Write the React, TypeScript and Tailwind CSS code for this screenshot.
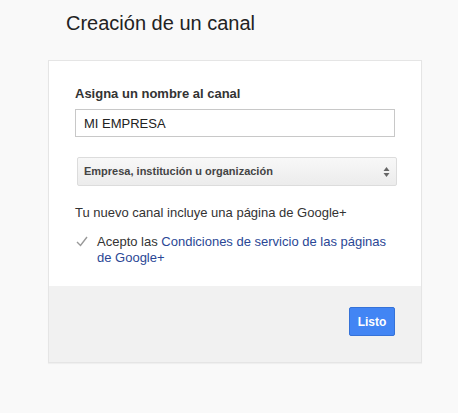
import { useState } from "react"

export default function App() {
  const [name, setName] = useState("MI EMPRESA")
  const [accepted, setAccepted] = useState(true)

  return (
    <div className="min-h-[413px] w-[458px] bg-[#f9f9f9] font-['Liberation_Sans',Arial,sans-serif] text-[#222]">
      <h1 className="pl-[66px] pt-[10px] text-[20px] leading-[26px] text-[#222]">Creación de un canal</h1>

      <div className="ml-[48px] mt-[24px] w-[374px] border border-[#e5e5e5] bg-white shadow-[0_1px_1px_rgba(0,0,0,0.04)]">
        <div className="px-[26px] pt-[25px] pb-[20px]">
          <label className="block text-[13px] font-bold leading-[16px] text-[#333]">Asigna un nombre al canal</label>
          <input
            value={name}
            onChange={(e) => setName(e.target.value)}
            className="mt-[7px] block h-[28px] w-[320px] border border-[#c8c8c8] bg-white px-[8px] text-[13px] text-[#222] outline-none"
          />

          <div className="ml-[2px] mt-[20px] flex h-[29px] w-[320px] items-center justify-between rounded-[2px] border border-[#dcdcdc] bg-gradient-to-b from-[#f8f8f8] to-[#ececec] pl-[6px] pr-[6px]">
            <span className="text-[11px] font-bold text-[#444]">Empresa, institución u organización</span>
            <svg width="7" height="12" viewBox="0 0 7 12">
              <path d="M3.5 1 L6.5 5 H0.5 Z" fill="#666" />
              <path d="M3.5 11 L6.5 7 H0.5 Z" fill="#666" />
            </svg>
          </div>

          <p className="mt-[19px] text-[13px] leading-[16px] text-[#333]">Tu nuevo canal incluye una página de Google+</p>

          <div className="mt-[13px] flex items-start">
            <button onClick={() => setAccepted(!accepted)} className="ml-[1px] mt-[1px] h-[12px] w-[12px] shrink-0">
              {accepted && (
                <svg width="12" height="11" viewBox="0 0 12 11">
                  <path d="M1 6 L4.5 9.5 L11 1" fill="none" stroke="#999" strokeWidth="1.4" />
                </svg>
              )}
            </button>
            <p className="ml-[9px] text-[13px] leading-[16px] text-[#333]">
              Acepto las <span className="text-[#2a4795]">Condiciones de servicio de las páginas de Google+</span>
            </p>
          </div>
        </div>

        <div className="flex h-[76px] justify-end bg-[#f1f1f1] pr-[26px] pt-[21px]">
          <button className="h-[29px] w-[46px] rounded-[2px] border border-[#3572d8] bg-[#4285f4] text-[12px] font-bold text-white">
            Listo
          </button>
        </div>
      </div>
    </div>
  )
}
